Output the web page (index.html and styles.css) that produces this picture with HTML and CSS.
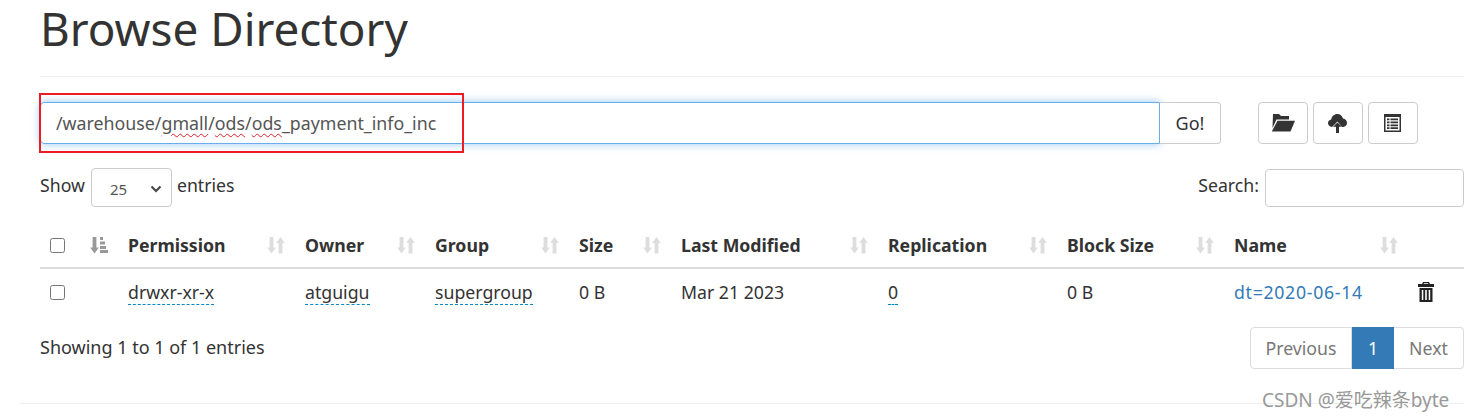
FILE: index.html
```html
<!DOCTYPE html>
<html lang="en">
<head>
    <meta charset="UTF-8">
    <meta name="viewport" content="width=device-width, initial-scale=1.0">
    <title>Browse Directory</title>
    <link rel="stylesheet" href="styles.css">
</head>
<body>
    <svg class="defs" width="0" height="0">
        <symbol id="sort" viewBox="0 0 18 18">
            <path d="M2.600 1h3.800v10.500h2.400L4.500 17.500 .2 11.500h2.400z"/>
            <path d="M11.600 17.500V7h-2.400L13.500 1l4.300 6h-2.400v10.500z"/>
        </symbol>
    </svg>
    <div class="container">
        <div class="page-header">
            <h1>Browse Directory</h1>
        </div>

        <div class="toolbar">
            <div class="input-group">
                <div class="path-input">/warehouse/<span class="typo">gmall</span>/<span class="typo">ods</span>/<span class="typo">ods</span>_payment_info_inc</div>
                <button class="btn btn-go">Go!</button>
            </div>
            <div class="actions">
                <button class="btn btn-icon">
                    <svg width="24" height="18" viewBox="0 0 24 18"><path d="M2 0h6l2 2h8v3.500H5.500L1.500 14z"/><path d="M6.500 6.800H24L19.500 17.500H.8z"/></svg>
                </button>
                <button class="btn btn-icon">
                    <svg width="19" height="20" viewBox="0 0 19 20"><path d="M4 14C1.800 14 0 12.300 0 10.100c0-2 1.300-3.400 3.200-3.700C3.800 3.300 6.300 1 9.300 1c2.800 0 5 1.900 5.700 4.600 2.400.2 4 2.200 4 4.500 0 2.200-1.600 3.900-3.800 3.900h-1L9.500 8.500z"/><path d="M5 13.800 9.500 9.500l4.500 4.300h-3V20H8v-6.200z"/></svg>
                </button>
                <button class="btn btn-icon">
                    <svg width="17" height="18" viewBox="0 0 17 18"><path fill-rule="evenodd" d="M0 0h17v18H0zM1.500 3v13.500h14V3zM3 4.500h2.500v1.800H3zM6.500 4.500H14v1.800H6.500zM3 7.500h2.500v1.800H3zM6.500 7.500H14v1.800H6.500zM3 10.500h2.500v1.800H3zM6.500 10.500H14v1.800H6.500zM3 13.300h2.500v1.800H3zM6.500 13.300H14v1.800H6.500z"/></svg>
                </button>
            </div>
        </div>

        <div class="table-controls">
            <label class="length">Show
                <span class="select">25
                    <svg width="12" height="8" viewBox="0 0 12 8"><path d="M1.500 1.500 6 6l4.500-4.500" fill="none" stroke="#444" stroke-width="2"/></svg>
                </span>
                entries</label>
            <label class="search">Search: <input type="text"></label>
        </div>

        <table class="files">
            <thead>
                <tr>
                    <th class="col-check"><input type="checkbox"></th>
                    <th class="col-order">
                        <svg class="icon-order" width="18" height="18" viewBox="0 0 18 18"><path d="M2.600 1h3.800v10.500h2.400L4.500 17.500 .2 11.500h2.400z"/><path d="M10 1h3v3h-3zM10 5.500h5v3h-5zM10 10h6v3h-6zM10 14h8v3h-8z"/></svg>
                    </th>
                    <th class="col-perm"><span class="th-inner">Permission<svg class="icon-sort"><use href="#sort"/></svg></span></th>
                    <th class="col-owner"><span class="th-inner">Owner<svg class="icon-sort"><use href="#sort"/></svg></span></th>
                    <th class="col-group"><span class="th-inner">Group<svg class="icon-sort"><use href="#sort"/></svg></span></th>
                    <th class="col-size"><span class="th-inner">Size<svg class="icon-sort"><use href="#sort"/></svg></span></th>
                    <th class="col-date"><span class="th-inner">Last Modified<svg class="icon-sort"><use href="#sort"/></svg></span></th>
                    <th class="col-repl"><span class="th-inner">Replication<svg class="icon-sort"><use href="#sort"/></svg></span></th>
                    <th class="col-block"><span class="th-inner">Block Size<svg class="icon-sort"><use href="#sort"/></svg></span></th>
                    <th class="col-name"><span class="th-inner">Name<svg class="icon-sort"><use href="#sort"/></svg></span></th>
                    <th class="col-del"></th>
                </tr>
            </thead>
            <tbody>
                <tr>
                    <td><input type="checkbox"></td>
                    <td></td>
                    <td><a class="editable">drwxr-xr-x</a></td>
                    <td><a class="editable">atguigu</a></td>
                    <td><a class="editable">supergroup</a></td>
                    <td>0 B</td>
                    <td>Mar 21 2023</td>
                    <td><a class="editable">0</a></td>
                    <td>0 B</td>
                    <td><a class="file-link">dt=2020-06-14</a></td>
                    <td>
                        <svg width="16" height="20" viewBox="0 0 16 20"><path fill-rule="evenodd" d="M5 0h6l1 2h4v3H0V2h4zM6 1.200 5.600 2h4.800L10 1.200zM1.500 6h13v14h-13zM3.800 8v10h1.500V8zM7.200 8v10h1.600V8zM10.700 8v10h1.500V8z"/></svg>
                    </td>
                </tr>
            </tbody>
        </table>

        <div class="table-footer">
            <div class="info">Showing 1 to 1 of 1 entries</div>
            <ul class="pagination">
                <li class="page page-prev">Previous</li>
                <li class="page page-current">1</li>
                <li class="page page-next">Next</li>
            </ul>
        </div>
    </div>
    <div class="footer-line"></div>

    <div class="red-box"></div>
    <div class="watermark">CSDN @爱吃辣条byte</div>
</body>
</html>
```

FILE: styles.css
```css
* {
    box-sizing: border-box;
}
html, body {
    margin: 0;
    height: 420px;
    overflow: hidden;
}
body {
    position: relative;
    background: #fff;
    color: #333;
    font-family: "Noto Sans", "Noto Sans CJK SC", sans-serif;
    font-size: 17.7px;
}
.defs {
    position: absolute;
}
.container {
    width: 1424px;
    margin-left: 40px;
}
.page-header {
    height: 77px;
    border-bottom: 1px solid #eee;
}
h1 {
    margin: 0;
    font-size: 45.8px;
    font-weight: 400;
    line-height: 56px;
}
.toolbar {
    display: flex;
    margin-top: 25px;
}
.input-group {
    display: flex;
    flex: none;
    width: 1181px;
    height: 42px;
}
.path-input {
    width: 1120px;
    padding-left: 15px;
    border: 1px solid #66afe9;
    border-radius: 4px 0 0 4px;
    box-shadow: 0 0 9px rgba(102, 175, 233, .7);
    color: #555;
    font-size: 17.8px;
    line-height: 40px;
    white-space: nowrap;
}
.typo {
    text-decoration: underline wavy #e0202a 1px;
    text-underline-offset: 3px;
}
.btn {
    border: 1px solid #ccc;
    border-radius: 4px;
    background: #fff;
    color: #333;
    font-family: inherit;
    font-size: 18px;
    padding: 0;
}
.btn-go {
    width: 61px;
    border-left: 0;
    border-radius: 0 4px 4px 0;
}
.actions {
    display: flex;
    gap: 5.500px;
    margin-left: 37px;
}
.btn-icon {
    display: flex;
    flex: none;
    align-items: center;
    justify-content: center;
    width: 49.500px;
    height: 42px;
}
.btn-icon svg {
    fill: #333;
}
.table-controls {
    display: flex;
    justify-content: space-between;
    margin-top: 24px;
    height: 39px;
    line-height: 34px;
}
.length {
    display: flex;
    gap: 5px;
}
.select {
    display: flex;
    align-items: center;
    justify-content: space-between;
    width: 81px;
    height: 39px;
    margin-left: 1px;
    padding: 2px 9px 0 18px;
    border: 1px solid #ccc;
    border-radius: 4px;
    color: #555;
    font-size: 15px;
}
.search {
    display: flex;
    gap: 6px;
}
.search input {
    width: 199px;
    height: 38px;
    margin-top: 1px;
    border: 1px solid #ccc;
    border-radius: 4px;
}
.files {
    width: 1424px;
    margin-top: 18px;
    border-collapse: collapse;
    table-layout: fixed;
}
.files th {
    height: 43px;
    padding: 0 10px 2px;
    border-bottom: 2px solid #ddd;
    text-align: left;
    font-weight: 700;
}
.files td {
    height: 47px;
    padding: 0 10px;
}
.files input[type="checkbox"] {
    display: block;
    width: 15px;
    height: 15px;
    margin: 0;
}
.col-check { width: 40px; }
.col-order { width: 38px; }
.col-perm { width: 177px; }
.col-owner { width: 130px; }
.col-group { width: 144px; }
.col-size { width: 102px; }
.col-date { width: 207px; }
.col-repl { width: 179px; }
.col-block { width: 167px; }
.col-name { width: 184px; }
.col-del { width: 56px; }
.th-inner {
    display: flex;
    justify-content: space-between;
    align-items: center;
}
.icon-sort {
    width: 18px;
    height: 18px;
    fill: #ddd;
    flex: none;
}
.icon-order {
    display: block;
    fill: #999;
}
.files td svg {
    display: block;
    fill: #222;
}
.editable {
    border-bottom: 1px dashed #08c;
}
.file-link {
    color: #337ab7;
    letter-spacing: .7px;
}
.table-footer {
    display: flex;
    justify-content: space-between;
    align-items: center;
    margin-top: 12px;
}
.info {
    padding-bottom: 2px;
    font-size: 18px;
}
.pagination {
    display: flex;
    margin: 0;
    padding: 0;
    list-style: none;
}
.page {
    height: 42px;
    border: 1px solid #ddd;
    line-height: 40px;
    text-align: center;
    color: #777;
}
.page-prev {
    width: 102px;
    border-radius: 4px 0 0 4px;
}
.page-current {
    width: 42px;
    border-color: #337ab7;
    background: #337ab7;
    color: #fff;
}
.page-next {
    width: 70px;
    border-left: 0;
    border-radius: 0 4px 4px 0;
}
.footer-line {
    width: 1444px;
    margin: 34px 0 0 20px;
    border-top: 1px solid #eee;
}
.red-box {
    position: absolute;
    left: 39px;
    top: 93px;
    width: 425px;
    height: 60px;
    border: 2px solid #ed1c24;
}
.watermark {
    position: absolute;
    left: 1262px;
    top: 389px;
    color: #888;
    font-size: 19px;
    line-height: 22px;
    opacity: .85;
}
```
